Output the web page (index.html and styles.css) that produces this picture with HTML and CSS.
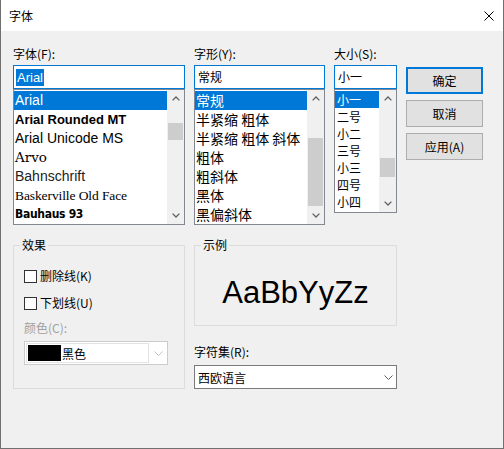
FILE: index.html
```html
<!DOCTYPE html>
<html lang="zh-CN">
<head>
<meta charset="utf-8">
<title>字体</title>
<link rel="stylesheet" href="styles.css">
</head>
<body>
<div class="window">
  <div class="titlebar">
    <span class="title">字体</span>
    <svg class="close" viewBox="0 0 10 10" width="10" height="10"><path d="M0.5 0.5 L9.5 9.5 M9.5 0.5 L0.5 9.5" stroke="#000" stroke-width="1" fill="none"/></svg>
  </div>
  <div class="content">
    <div class="top">
      <div class="col">
        <div class="label">字体(F):</div>
        <div class="input"><span class="selected-text">Arial</span></div>
        <div class="list">
          <div class="items">
            <div class="item sel f-arial">Arial</div>
            <div class="item f-rounded">Arial Rounded MT</div>
            <div class="item f-arial">Arial Unicode MS</div>
            <div class="item f-arvo">Arvo</div>
            <div class="item f-bahn">Bahnschrift</div>
            <div class="item f-bask">Baskerville Old Face</div>
            <div class="item f-bauhaus">Bauhaus 93</div>
          </div>
          <div class="scrollbar">
            <div class="arrow"><svg width="8" height="5" viewBox="0 0 8 5"><polyline points="0.6,4.4 4,1 7.4,4.4" fill="none" stroke="#606060" stroke-width="1.3"/></svg></div>
            <div class="track"><div class="thumb thumb-font"></div></div>
            <div class="arrow"><svg width="8" height="5" viewBox="0 0 8 5"><polyline points="0.6,0.6 4,4 7.4,0.6" fill="none" stroke="#606060" stroke-width="1.3"/></svg></div>
          </div>
        </div>
      </div>
      <div class="col">
        <div class="label">字形(Y):</div>
        <div class="input"><span class="input-text">常规</span></div>
        <div class="list">
          <div class="items cjk">
            <div class="item sel">常规</div>
            <div class="item">半紧缩 粗体</div>
            <div class="item">半紧缩 粗体 斜体</div>
            <div class="item">粗体</div>
            <div class="item">粗斜体</div>
            <div class="item">黑体</div>
            <div class="item">黑偏斜体</div>
          </div>
          <div class="scrollbar">
            <div class="arrow"><svg width="8" height="5" viewBox="0 0 8 5"><polyline points="0.6,4.4 4,1 7.4,4.4" fill="none" stroke="#606060" stroke-width="1.3"/></svg></div>
            <div class="track"><div class="thumb thumb-style"></div></div>
            <div class="arrow"><svg width="8" height="5" viewBox="0 0 8 5"><polyline points="0.6,0.6 4,4 7.4,0.6" fill="none" stroke="#606060" stroke-width="1.3"/></svg></div>
          </div>
        </div>
      </div>
      <div class="col">
        <div class="label">大小(S):</div>
        <div class="input"><span class="input-text">小一</span></div>
        <div class="list short">
          <div class="items">
            <div class="item sel">小一</div>
            <div class="item">二号</div>
            <div class="item">小二</div>
            <div class="item">三号</div>
            <div class="item">小三</div>
            <div class="item">四号</div>
            <div class="item">小四</div>
          </div>
          <div class="scrollbar">
            <div class="arrow"><svg width="8" height="5" viewBox="0 0 8 5"><polyline points="0.6,4.4 4,1 7.4,4.4" fill="none" stroke="#606060" stroke-width="1.3"/></svg></div>
            <div class="track"><div class="thumb thumb-size"></div></div>
            <div class="arrow"><svg width="8" height="5" viewBox="0 0 8 5"><polyline points="0.6,0.6 4,4 7.4,0.6" fill="none" stroke="#606060" stroke-width="1.3"/></svg></div>
          </div>
        </div>
      </div>
      <div class="buttons">
        <div class="btn default">确定</div>
        <div class="btn">取消</div>
        <div class="btn">应用(A)</div>
      </div>
    </div>
    <div class="bottom">
      <fieldset class="group">
        <legend>效果</legend>
        <div class="effects-body">
          <div class="check"><span class="box"></span><span>删除线(K)</span></div>
          <div class="check"><span class="box"></span><span>下划线(U)</span></div>
          <div class="disabled">颜色(C):</div>
          <div class="color-combo">
            <div class="color-field"><span class="swatch"></span><span>黑色</span></div>
            <div class="color-arrow"><svg width="9" height="5" viewBox="0 0 9 5"><polyline points="0.5,0.5 4.5,4.5 8.5,0.5" fill="none" stroke="#c4c4c4" stroke-width="1"/></svg></div>
          </div>
        </div>
      </fieldset>
      <div class="right">
        <fieldset class="group">
          <legend>示例</legend>
          <div class="sample-body">AaBbYyZz</div>
        </fieldset>
        <div class="label charset-label">字符集(R):</div>
        <div class="combo">
          <span>西欧语言</span>
          <svg width="9" height="5" viewBox="0 0 9 5"><polyline points="0.5,0.5 4.5,4.5 8.5,0.5" fill="none" stroke="#606060" stroke-width="1"/></svg>
        </div>
      </div>
    </div>
  </div>
</div>
</body>
</html>
```
FILE: styles.css
```css
* { box-sizing: border-box; }
html, body { margin: 0; padding: 0; }
body {
  width: 504px;
  height: 449px;
  overflow: hidden;
  background: #f0f0f0;
  color: #000;
  font-family: "Noto Sans CJK SC", "Noto Sans", sans-serif;
  font-size: 12px;
}
.window {
  width: 504px;
  height: 449px;
  border: 1px solid #707070;
  border-top: none;
  background: #f0f0f0;
  display: flex;
  flex-direction: column;
}
.titlebar {
  height: 31px;
  flex: none;
  background: #fff;
  display: flex;
  align-items: center;
  justify-content: space-between;
  padding: 0 9px 0 8px;
}
.title { line-height: 31px; }
.close { display: block; }

.content { padding: 15px 0 0 12px; }

.top {
  display: grid;
  grid-template-columns: 172px 131px 63px 77px;
  column-gap: 9px;
  align-items: start;
}
.label { height: 16px; line-height: 16px; white-space: nowrap; }
.input {
  margin-top: 3px;
  height: 24px;
  border: 1px solid #0078d7;
  background: #fff;
  padding-left: 2px;
  display: flex;
  align-items: center;
}
.selected-text {
  background: #0078d7;
  color: #fff;
  font-family: "Liberation Sans", Arial, sans-serif;
  font-size: 13px;
  height: 17px;
  line-height: 17px;
  padding: 0 1px;
}
.input-text { padding-left: 1px; line-height: 16px; }

.list {
  height: 136px;
  border: 1px solid #828790;
  background: #fff;
  display: flex;
}
.list.short { height: 124px; }
.items { flex: 1; min-width: 0; overflow: hidden; padding-top: 1px; }
.item {
  height: 19px;
  line-height: 19px;
  padding-left: 1px;
  white-space: nowrap;
  font-size: 14px;
}
.item.sel { background: #0078d7; color: #fff; }
.short .item { height: 17px; line-height: 17px; font-size: 12px; padding-left: 2px; }

.f-arial { font-family: "Liberation Sans", Arial, sans-serif; }
.f-rounded { font-family: "Liberation Sans", Arial, sans-serif; font-weight: bold; font-size: 13px; }
.f-arvo { font-family: "DejaVu Serif", serif; font-size: 13.5px; }
.f-bahn { font-family: "Liberation Sans", Arial, sans-serif; color: #222; }
.f-bask { font-family: "Liberation Serif", "Times New Roman", serif; font-size: 13.5px; letter-spacing: -0.1px; }
.f-bauhaus { font-family: "DejaVu Sans", sans-serif; font-stretch: condensed; font-weight: 900; font-size: 12px; letter-spacing: -0.3px; }

.scrollbar {
  width: 17px;
  flex: none;
  background: #f0f0f0;
  display: flex;
  flex-direction: column;
}
.arrow {
  height: 17px;
  flex: none;
  display: flex;
  align-items: center;
  justify-content: center;
}
.arrow svg { display: block; }
.track { flex: 1; padding: 0 1px; display: flex; flex-direction: column; }
.thumb { background: #cdcdcd; }
.thumb-font { margin-top: 16px; height: 17px; }
.thumb-style { margin-top: 31px; height: 68px; }
.thumb-size { margin-top: 51px; height: 19px; }

.buttons {
  display: flex;
  flex-direction: column;
  gap: 6px;
  padding-top: 21px;
}
.btn {
  height: 27px;
  border: 1px solid #adadad;
  background: #e1e1e1;
  display: flex;
  align-items: center;
  justify-content: center;
}
.btn.default { border: 2px solid #0078d7; }

.bottom {
  display: grid;
  grid-template-columns: 172px 203px;
  column-gap: 9px;
  align-items: start;
  margin-top: 12px;
}
fieldset.group {
  margin: 0;
  padding: 0;
  min-width: 0;
  border: 1px solid #dcdcdc;
}
legend {
  padding: 0 2px;
  margin-left: 6px;
  line-height: 16px;
  font-size: 12px;
}
.effects-body {
  display: flex;
  flex-direction: column;
  padding: 15px 0 23px 10px;
}
.check {
  display: flex;
  align-items: center;
  gap: 3px;
  height: 16px;
  line-height: 16px;
}
.check + .check { margin-top: 11px; }
.box {
  width: 13px;
  height: 13px;
  border: 1px solid #333;
  background: #fff;
}
.disabled { margin-top: 9px; height: 16px; line-height: 16px; color: #a0a0a0; }
.color-combo {
  margin-top: 5px;
  width: 144px;
  height: 24px;
  border: 1px solid #cccccc;
  background: #fff;
  padding: 1px;
  display: flex;
}
.color-field {
  width: 123px;
  border: 1px solid #e3e3e3;
  padding-left: 1px;
  display: flex;
  align-items: center;
  gap: 1px;
}
.swatch { width: 33px; height: 16px; background: #000; }
.color-arrow { flex: 1; display: flex; align-items: center; justify-content: center; padding-left: 2px; }
.color-arrow svg { display: block; }

.sample-body {
  height: 72px;
  padding-top: 8px;
  display: flex;
  align-items: center;
  justify-content: center;
  font-family: "Liberation Sans", Arial, sans-serif;
  font-size: 31px;
}
.charset-label { margin-top: 18px; }
.combo {
  margin-top: 5px;
  height: 24px;
  border: 1px solid #7a7a7a;
  background: #fff;
  display: flex;
  align-items: center;
  justify-content: space-between;
  padding: 0 3px 0 3px;
}
.combo svg { display: block; }
```
